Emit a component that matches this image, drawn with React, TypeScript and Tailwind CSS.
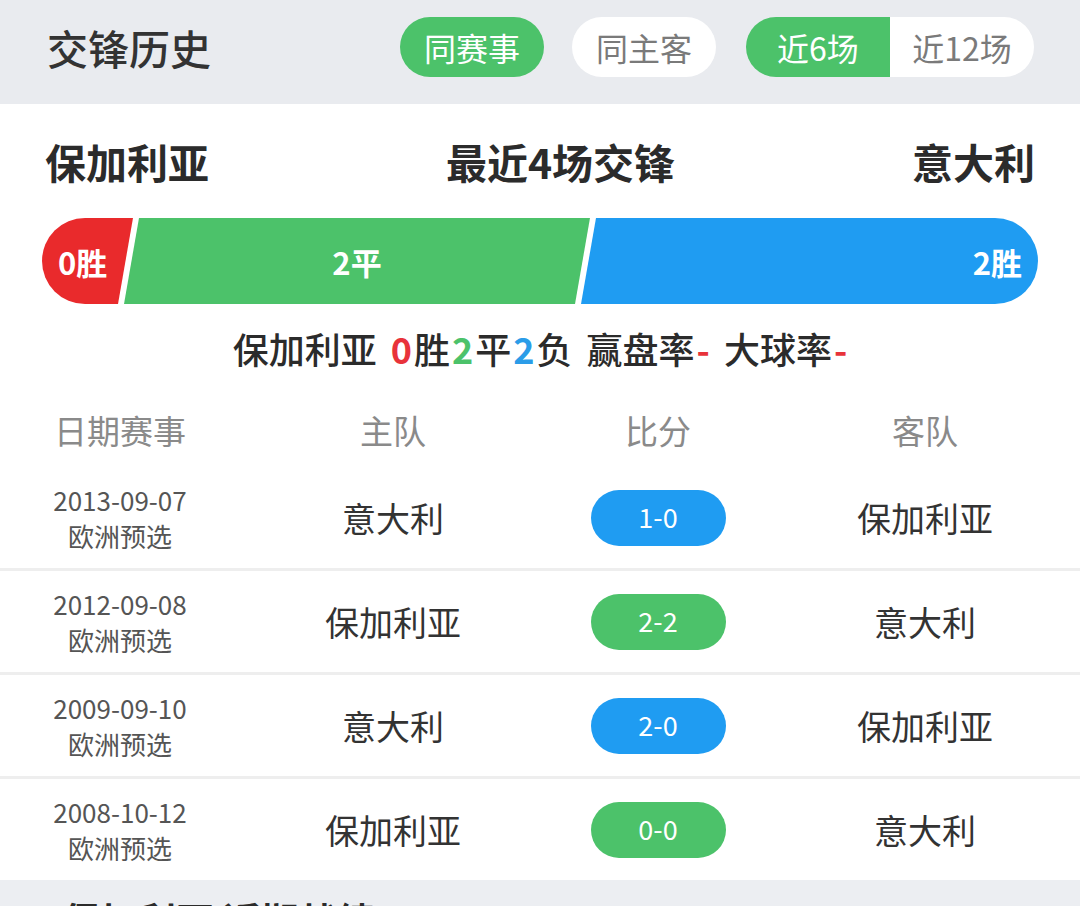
import { clsx } from "clsx";

const matches = [
  { date: "2013-09-07", league: "欧洲预选", home: "意大利", score: "1-0", away: "保加利亚", kind: "win" },
  { date: "2012-09-08", league: "欧洲预选", home: "保加利亚", score: "2-2", away: "意大利", kind: "draw" },
  { date: "2009-09-10", league: "欧洲预选", home: "意大利", score: "2-0", away: "保加利亚", kind: "win" },
  { date: "2008-10-12", league: "欧洲预选", home: "保加利亚", score: "0-0", away: "意大利", kind: "draw" },
];

const font = "font-['Noto_Sans_CJK_SC','Noto_Sans',sans-serif]";

function Pill({ active, children, className }: { active?: boolean; children: string; className?: string }) {
  return (
    <div
      className={clsx(
        "h-[60px] w-[144px] flex items-center justify-center text-[32px] leading-none",
        active ? "bg-[#4cc26a] text-white" : "bg-white text-[#7a7a7a]",
        className,
      )}
    >
      {children}
    </div>
  );
}

function ResultBar() {
  return (
    <div className="mx-[42px] relative h-[86px] rounded-[43px] overflow-hidden bg-white">
      <div className="absolute left-0 top-0 h-full w-[91px] bg-[#e92a2c] [clip-path:polygon(0_0,100%_0,calc(100%-15px)_100%,0_100%)] flex items-center pl-[16px]">
        <span className="text-white font-bold text-[31px] leading-none">0胜</span>
      </div>
      <div className="absolute left-[82px] top-0 h-full w-[466px] bg-[#4cc26a] [clip-path:polygon(15px_0,100%_0,calc(100%-15px)_100%,0_100%)] flex items-center justify-center">
        <span className="text-white font-bold text-[31px] leading-none">2平</span>
      </div>
      <div className="absolute left-[539px] right-0 top-0 h-full bg-[#1f9cf2] [clip-path:polygon(15px_0,100%_0,100%_100%,0_100%)] flex items-center justify-end pr-[16px]">
        <span className="text-white font-bold text-[31px] leading-none">2胜</span>
      </div>
    </div>
  );
}

export default function App() {
  return (
    <div className={clsx("w-[1080px] h-[906px] overflow-hidden bg-[#eceef2]", font)}>
      <div className="h-[104px] bg-[#e9ebef] flex items-center justify-between pl-[47px] pr-[46px] pb-[10px]">
        <div className="text-[41px] font-medium text-[#333] leading-none">交锋历史</div>
        <div className="flex items-center">
          <Pill active className="rounded-full">同赛事</Pill>
          <Pill className="rounded-full ml-[28px]">同主客</Pill>
          <div className="ml-[30px] flex rounded-full overflow-hidden">
            <Pill active>近6场</Pill>
            <Pill>近12场</Pill>
          </div>
        </div>
      </div>

      <div className="bg-white">
        <div className="h-[114px] flex items-center justify-between px-[45px] text-[41px] font-bold text-[#2b2b2b] leading-none">
          <span>保加利亚</span>
          <span>最近4场交锋</span>
          <span>意大利</span>
        </div>

        <ResultBar />

        <div className="mt-[19px] h-[50px] flex items-center justify-center text-[36px] text-[#2b2b2b] leading-none font-medium">
          <span>保加利亚</span>
          <span className="ml-[14px] mr-[2px] text-[#e8333a] font-bold">0</span>
          <span>胜</span>
          <span className="mx-[2px] text-[#4cc26a] font-bold">2</span>
          <span>平</span>
          <span className="mx-[2px] text-[#2b9ce8] font-bold">2</span>
          <span>负</span>
          <span className="ml-[14px]">赢盘率</span>
          <span className="ml-[2px] text-[#e8333a] font-bold">-</span>
          <span className="ml-[14px]">大球率</span>
          <span className="ml-[2px] text-[#e8333a] font-bold">-</span>
        </div>

        <div className="grid grid-cols-[240px_306px_224px_1fr] pt-[38px] pb-[18px] text-[33px] leading-[38px] text-[#8a8a8a] text-center">
          <span>日期赛事</span>
          <span>主队</span>
          <span>比分</span>
          <span>客队</span>
        </div>

        {matches.map((m, i) => (
          <div key={i}>
            <div className="grid grid-cols-[240px_306px_224px_1fr] h-[101px] items-center text-center">
              <div className="flex flex-col items-center text-[26px] leading-[36px] text-[#555]">
                <span>{m.date}</span>
                <span>{m.league}</span>
              </div>
              <div className="text-[34px] text-[#333]">{m.home}</div>
              <div className="flex justify-center">
                <div
                  className={clsx(
                    "w-[135px] h-[56px] rounded-full flex items-center justify-center text-white text-[27px]",
                    m.kind === "win" ? "bg-[#1f9cf2]" : "bg-[#4cc26a]",
                  )}
                >
                  {m.score}
                </div>
              </div>
              <div className="text-[34px] text-[#333]">{m.away}</div>
            </div>
            {i < matches.length - 1 && <div className="h-[3px] bg-[#eeeeee]" />}
          </div>
        ))}
      </div>

      <div className="pt-[20px] pl-[62px] text-[38px] font-bold text-[#2b2b2b] leading-none">
        保加利亚 近期战绩
      </div>
    </div>
  );
}
